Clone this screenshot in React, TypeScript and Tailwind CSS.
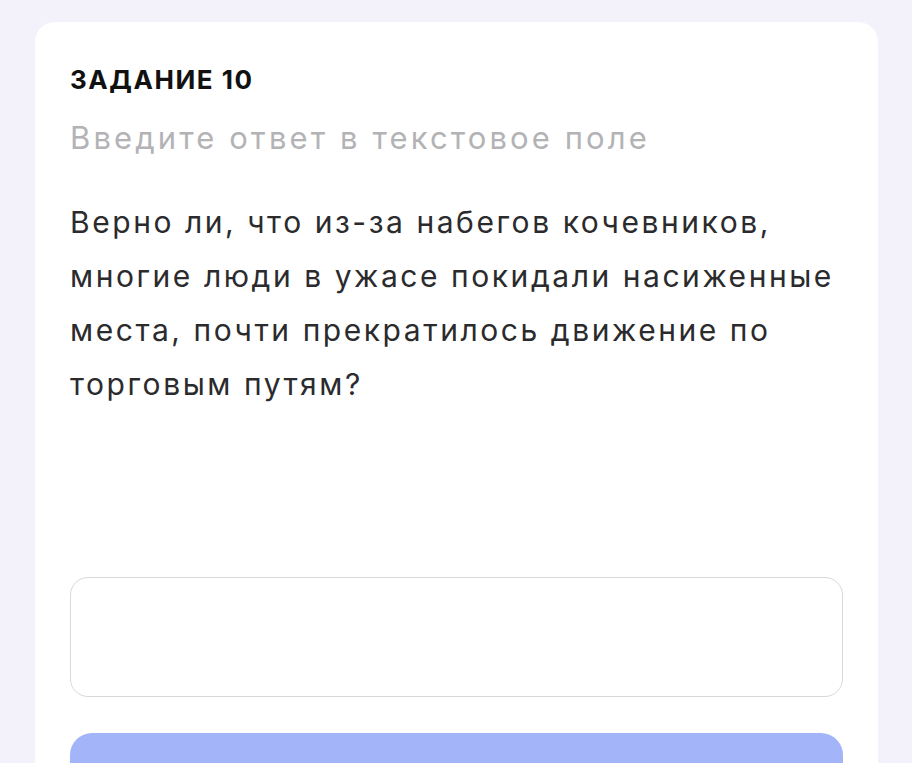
const questionLines = [
  "Верно ли, что из-за набегов кочевников,",
  "многие люди в ужасе покидали насиженные",
  "места, почти прекратилось движение по",
  "торговым путям?",
];

export default function App() {
  return (
    <div
      className="min-h-[763px] bg-[#f3f2fa] pt-[22px] pr-[34px] pl-[35px]"
      style={{ fontFamily: "Inter, 'Noto Sans', sans-serif" }}
    >
      <div className="rounded-[20px] bg-white px-[35px] pt-[43px] pb-[40px]">
        <h2 className="text-[26px] leading-[30px] font-bold tracking-[0.06em] text-[#111111]">
          ЗАДАНИЕ 10
        </h2>
        <p className="mt-[24px] text-[31px] leading-[38px] tracking-[0.1em] whitespace-nowrap text-[#b3b3b6]">
          Введите ответ в текстовое поле
        </p>
        <div className="mt-[38px] text-[30px] leading-[54px] tracking-[0.085em] text-[#2b2b2e]">
          {questionLines.map((line) => (
            <div key={line} className="whitespace-nowrap">
              {line}
            </div>
          ))}
        </div>
        <textarea className="mt-[166px] block h-[120px] w-full resize-none rounded-[18px] border border-[#d8d8db] bg-white px-5 py-4 text-[26px] outline-none" />
        <button
          aria-label="Ответить"
          className="mt-[36px] block h-[84px] w-full rounded-[22px] bg-[#a3b4f8]"
        />
      </div>
    </div>
  );
}
